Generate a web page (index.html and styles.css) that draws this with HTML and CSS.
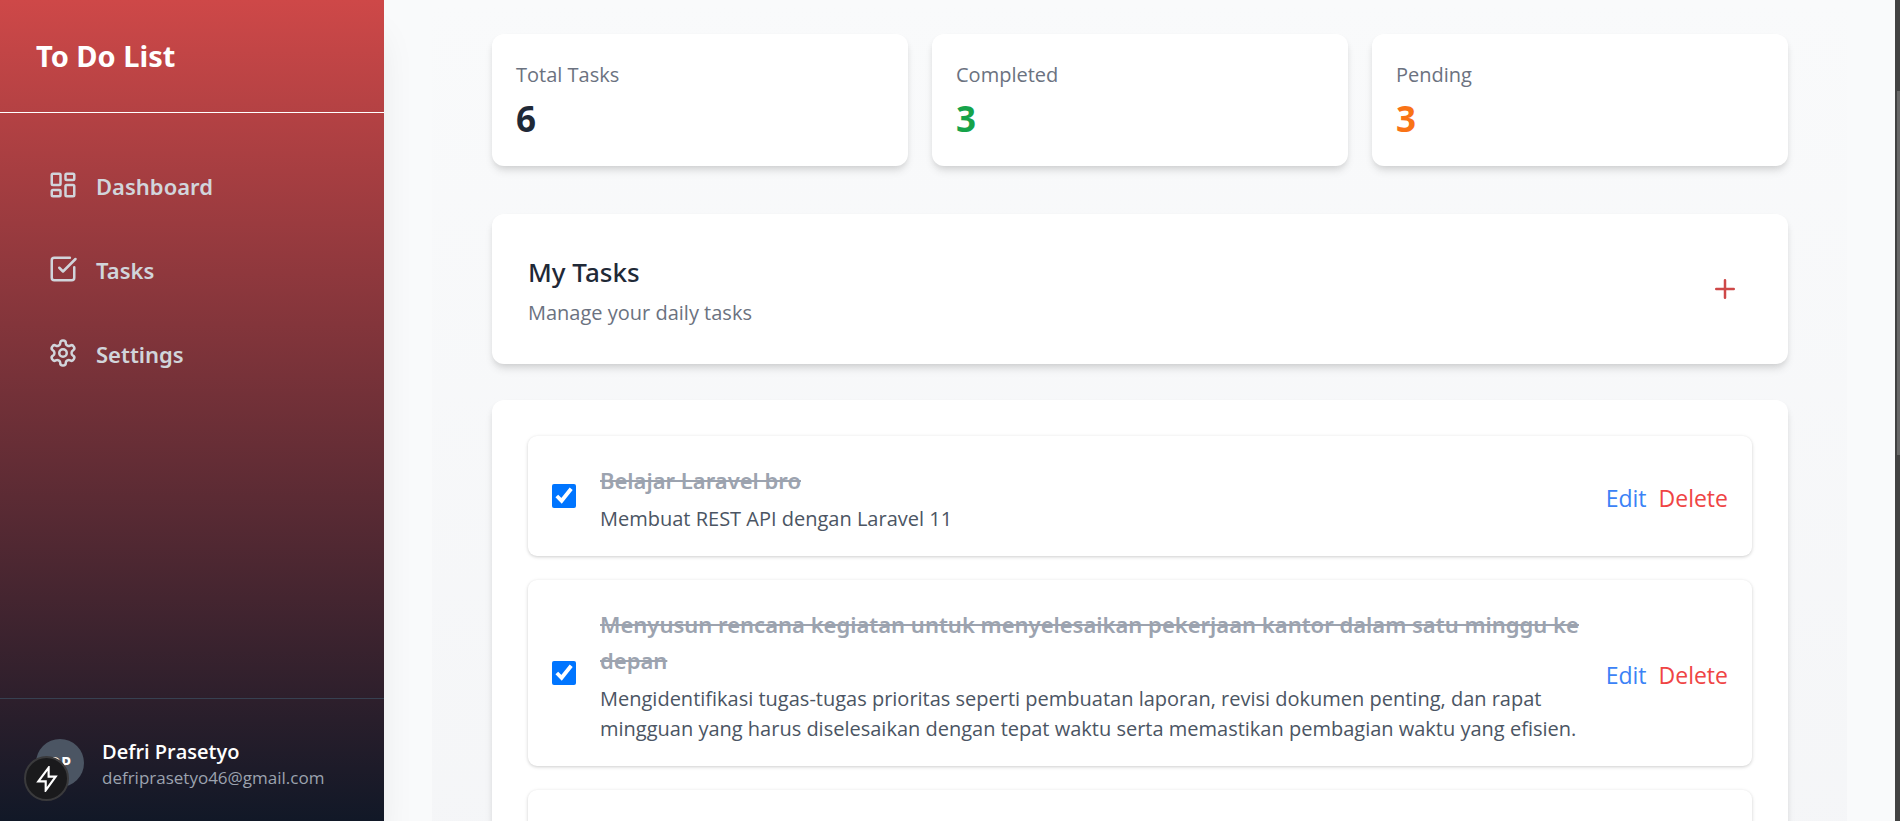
FILE: index.html
```html
<!DOCTYPE html>
<html lang="en">
<head>
<meta charset="utf-8">
<title>To Do List</title>
<link rel="stylesheet" href="styles.css">
</head>
<body>
<div class="app">
  <aside class="sidebar">
    <header class="brand"><h1 class="brand-title">To Do List</h1></header>
    <nav class="nav">
      <a class="nav-link" href="#dashboard">
        <svg class="icon" viewBox="0 0 24 24"><rect x="3" y="3" width="7" height="9" rx="1"/><rect x="14" y="3" width="7" height="5" rx="1"/><rect x="14" y="12" width="7" height="9" rx="1"/><rect x="3" y="16" width="7" height="5" rx="1"/></svg>
        <span class="nav-label">Dashboard</span>
      </a>
      <a class="nav-link" href="#tasks">
        <svg class="icon" viewBox="0 0 24 24"><path d="M21 10.5V19a2 2 0 0 1-2 2H5a2 2 0 0 1-2-2V5a2 2 0 0 1 2-2h12.5"/><path d="m9 11 3 3L22 4"/></svg>
        <span class="nav-label">Tasks</span>
      </a>
      <a class="nav-link" href="#settings">
        <svg class="icon" viewBox="0 0 24 24"><path d="M12.22 2h-.44a2 2 0 0 0-2 2v.18a2 2 0 0 1-1 1.73l-.43.25a2 2 0 0 1-2 0l-.15-.08a2 2 0 0 0-2.73.73l-.22.38a2 2 0 0 0 .73 2.73l.15.1a2 2 0 0 1 1 1.72v.51a2 2 0 0 1-1 1.74l-.15.09a2 2 0 0 0-.73 2.73l.22.38a2 2 0 0 0 2.73.73l.15-.08a2 2 0 0 1 2 0l.43.25a2 2 0 0 1 1 1.73V20a2 2 0 0 0 2 2h.44a2 2 0 0 0 2-2v-.18a2 2 0 0 1 1-1.73l.43-.25a2 2 0 0 1 2 0l.15.08a2 2 0 0 0 2.73-.73l.22-.39a2 2 0 0 0-.73-2.73l-.15-.08a2 2 0 0 1-1-1.74v-.5a2 2 0 0 1 1-1.74l.15-.09a2 2 0 0 0 .73-2.73l-.22-.38a2 2 0 0 0-2.73-.73l-.15.08a2 2 0 0 1-2 0l-.43-.25a2 2 0 0 1-1-1.73V4a2 2 0 0 0-2-2z"/><circle cx="12" cy="12" r="3"/></svg>
        <span class="nav-label">Settings</span>
      </a>
    </nav>
    <footer class="profile">
      <div class="avatar">DP</div>
      <div class="profile-text">
        <div class="profile-name">Defri Prasetyo</div>
        <div class="profile-mail">defriprasetyo46@gmail.com</div>
      </div>
    </footer>
    <button class="dev-badge" type="button" aria-label="Open developer tools">
      <svg class="bolt" viewBox="0 0 24 24"><path d="M13.5 1.5 4 14.2h6.8v8.3L20 9.8h-6.5z"/></svg>
    </button>
  </aside>
  <main class="main">
    <div class="content">
      <section class="stats">
        <div class="card stat"><div class="stat-label">Total Tasks</div><div class="stat-value">6</div></div>
        <div class="card stat"><div class="stat-label">Completed</div><div class="stat-value done">3</div></div>
        <div class="card stat"><div class="stat-label">Pending</div><div class="stat-value pending">3</div></div>
      </section>
      <section class="card heading">
        <div>
          <h2 class="heading-title">My Tasks</h2>
          <p class="heading-sub">Manage your daily tasks</p>
        </div>
        <button class="add" type="button" aria-label="Add task"><svg class="icon" viewBox="0 0 24 24"><path d="M5 12h14M12 5v14"/></svg></button>
      </section>
      <ul class="card tasks">
        <li class="task">
          <input class="check" type="checkbox" id="t1" checked>
          <div class="task-text">
            <label class="task-title" for="t1">Belajar Laravel bro</label>
            <p class="task-desc">Membuat REST API dengan Laravel 11</p>
          </div>
          <div class="actions"><button class="edit" type="button">Edit</button><button class="delete" type="button">Delete</button></div>
        </li>
        <li class="task">
          <input class="check" type="checkbox" id="t2" checked>
          <div class="task-text">
            <label class="task-title" for="t2">Menyusun rencana kegiatan untuk menyelesaikan pekerjaan kantor dalam satu minggu ke depan</label>
            <p class="task-desc">Mengidentifikasi tugas-tugas prioritas seperti pembuatan laporan, revisi dokumen penting, dan rapat mingguan yang harus diselesaikan dengan tepat waktu serta memastikan pembagian waktu yang efisien.</p>
          </div>
          <div class="actions"><button class="edit" type="button">Edit</button><button class="delete" type="button">Delete</button></div>
        </li>
        <li class="task"></li>
      </ul>
    </div>
  </main>
  <div class="scrollbar"><div class="thumb"></div></div>
</div>
</body>
</html>
```
FILE: styles.css
```css
* { box-sizing: border-box; margin: 0; padding: 0; }
body { font-family: "Open Sans", "Noto Sans", sans-serif; color: #1f2937; background: #f9fafb; }
button { border: 0; background: none; font: inherit; cursor: pointer; }
.app { display: flex; height: 100vh; overflow: hidden; }

.brand-title, .nav-link, .heading-title, .task-title { font-family: "Noto Sans", "Open Sans", sans-serif; }

.sidebar { position: relative; flex: 0 0 384px; display: flex; flex-direction: column; background: linear-gradient(#ce4848, #111827); color: #fff; box-shadow: 0 30px 36px -8px rgba(0, 0, 0, .1); z-index: 1; }
.brand { padding: 36px; border-bottom: 1px solid #fff; }
.brand-title { font-size: 29px; line-height: 40px; font-weight: 700; }
.nav { flex: 1; display: flex; flex-direction: column; gap: 12px; padding: 36px 24px; }
.nav-link { display: flex; align-items: center; gap: 18px; height: 72px; padding: 0 24px; color: #d1d5db; font-size: 22px; font-weight: 600; line-height: 36px; text-decoration: none; }
.nav-label { padding-top: 2px; }
.icon { width: 30px; height: 30px; fill: none; stroke: currentColor; stroke-width: 2; stroke-linecap: round; stroke-linejoin: round; }
.profile { display: flex; align-items: center; gap: 18px; padding: 36px 36px 30px; border-top: 1px solid #374151; }
.avatar { width: 48px; height: 48px; border-radius: 50%; background: #4b5563; display: flex; align-items: center; justify-content: center; font-size: 16px; font-weight: 700; }
.profile-text { padding-top: 4px; white-space: nowrap; }
.profile-name { font-size: 20px; line-height: 26px; font-weight: 600; }
.profile-mail { font-size: 17px; line-height: 26px; color: #9ca3af; }
.dev-badge { position: absolute; left: 24px; bottom: 20px; width: 45px; height: 45px; border-radius: 50%; border: 2px solid #3a3a3c; background: #1a1a1c; display: flex; align-items: center; justify-content: center; }
.bolt { width: 26px; height: 26px; fill: none; stroke: #fff; stroke-width: 2; }

.main { flex: 1; padding: 0 48px; overflow: hidden; background: #f9fafb; }
.content { display: flex; flex-direction: column; min-height: 100%; padding: 34px 59px 34px 60px; background: linear-gradient(#f9fafb, #f4f5f7); }
.card { background: #fff; border-radius: 12px; box-shadow: 0 6px 9px -1px rgba(0, 0, 0, .1), 0 3px 6px -2px rgba(0, 0, 0, .1); }
.stats { display: grid; grid-template-columns: repeat(3, 1fr); gap: 24px; margin-bottom: 48px; }
.stat { padding: 24px; }
.stat-label { font-size: 20px; line-height: 34px; color: #6b7280; }
.stat-value { padding-top: 4px; font-size: 35px; line-height: 46px; font-weight: 700; }
.done { color: #16a34a; }
.pending { color: #f97316; }
.heading { display: flex; align-items: center; justify-content: space-between; padding: 36px; margin-bottom: 36px; }
.heading-title { font-size: 26px; line-height: 44px; font-weight: 500; }
.heading-sub { padding-top: 4px; font-size: 20px; line-height: 30px; color: #6b7280; }
.add { display: flex; padding: 12px; color: #ce4848; }
.tasks { display: flex; flex-direction: column; gap: 24px; padding: 36px; list-style: none; }
.task { display: flex; align-items: center; gap: 24px; min-height: 120px; padding: 24px; border-radius: 9px; background: #fff; box-shadow: 0 1px 4px rgba(0, 0, 0, .1), 0 1px 3px rgba(0, 0, 0, .1); }
.check { flex: none; width: 24px; height: 24px; accent-color: #0075ff; }
.task-text { flex: 1; padding-top: 2px; margin-bottom: -2px; }
.task-title { display: block; font-size: 22px; line-height: 36px; font-weight: 600; color: #9ca3af; text-decoration: line-through; }
.task-desc { padding-top: 6px; font-size: 20px; line-height: 30px; color: #4b5563; }
.actions { display: flex; gap: 12px; padding-top: 4px; font-size: 23px; line-height: 36px; }
.edit { color: #3b82f6; }
.delete { color: #ef4444; }

.scrollbar { position: relative; flex: 0 0 5px; background: #424242; }
.thumb { position: absolute; top: 91px; left: 2px; right: 0; height: 364px; background: #686868; }
```
